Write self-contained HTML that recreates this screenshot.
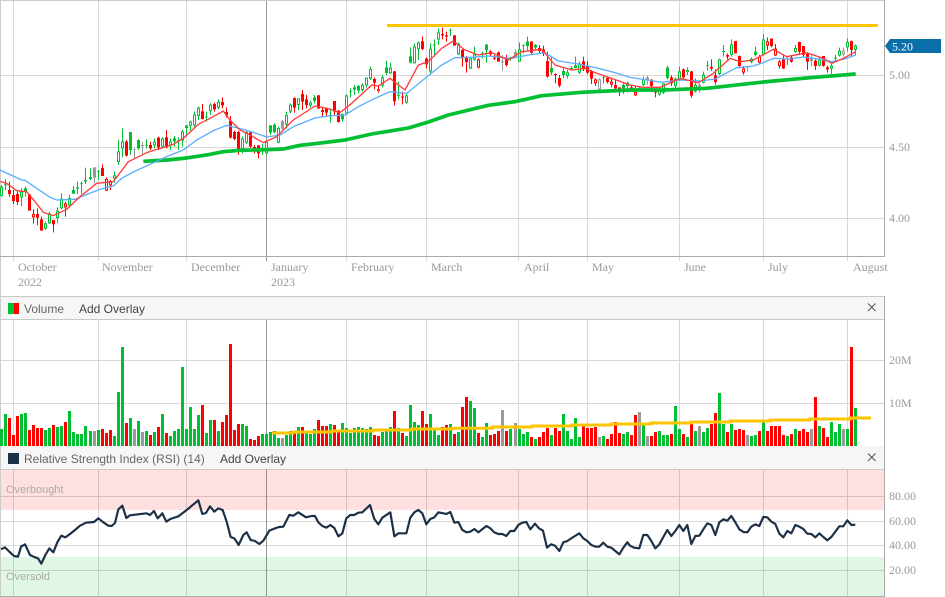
<!DOCTYPE html>
<html><head><meta charset="utf-8"><title>Chart</title>
<style>
html,body{margin:0;padding:0;background:#fff;width:945px;height:597px;overflow:hidden}
svg{display:block}
.ax{font:12px "Liberation Serif",serif;fill:#999}
.hd{font:12px "Liberation Sans",sans-serif}
.ob{font:11px "Liberation Sans",sans-serif;fill:#aaa}
.gw{fill:none;stroke:#00bf33;stroke-width:3}
.gb{fill:none;stroke:#00bf33;stroke-width:9}
.rw{fill:none;stroke:#f00;stroke-width:3}
.rb{fill:none;stroke:#f00;stroke-width:9}
.kw{fill:none;stroke:#999;stroke-width:3}
.kb{fill:none;stroke:#999;stroke-width:9}
.wb{fill:none;stroke:#fff;stroke-width:3}
.grid{fill:none;stroke:#d8d8d8;stroke-width:1}
</style></head><body>
<svg width="945" height="597" viewBox="0 0 945 597" xmlns="http://www.w3.org/2000/svg">
<rect width="945" height="597" fill="#fff"/>
<!-- grid -->
<path class="grid" d="M1 75.5H884M1 147.5H884M1 218.5H884M1 360.5H884M1 403.5H884M1 496.5H884M1 521.5H884M1 545.5H884M1 570.5H884"/>
<path class="grid" d="M13.5 1V261M98.5 1V261M186.5 1V261M346.5 1V261M426.5 1V261M518.5 1V261M587.5 1V261M679.5 1V261M763.5 1V261M847.5 1V261M13.5 319V446M98.5 319V446M186.5 319V446M346.5 319V446M426.5 319V446M518.5 319V446M587.5 319V446M679.5 319V446M763.5 319V446M847.5 319V446M13.5 469V596M98.5 469V596M186.5 469V596M346.5 469V596M426.5 469V596M518.5 469V596M587.5 469V596M679.5 469V596M763.5 469V596M847.5 469V596"/>
<path fill="none" stroke="#999" d="M266.5 1V261M266.5 319V446M266.5 469V596"/>
<!-- frame -->
<path fill="none" stroke="#ccc" d="M.5 0V597M0 .5H885"/>
<path fill="none" stroke="#aaa" d="M0 256.5H885M884.5 0V257"/>
<!-- main yellow -->
<path fill="none" stroke="#ffc400" stroke-width="3" d="M387 25.5H878"/>
<!-- candles -->
<g transform="scale(.33333)">
<g>
<path class="gw" d="M4.5 555V590M16.5 538V570M64.5 565V618M76.5 560V590M136.5 665V690M148.5 635V672M172.5 622V670M184.5 580V628M208.5 585V622M220.5 558V582M232.5 545V582M244.5 545V582M256.5 503V552M271.5 505V540M295.5 510V540M343.5 515V548M355.5 420V495M367.5 385V472M391.5 396V465M415.5 418V450M439.5 418V445M463.5 415V445M487.5 412V445M511.5 415V450M523.5 408V440M535.5 412V450M547.5 390V440M559.5 375V405M571.5 362V392M583.5 335V383M595.5 320V360M619.5 335V365M631.5 310V345M655.5 298V328M727.5 410V460M739.5 392V432M787.5 432V465M799.5 425V462M811.5 375V405M823.5 370V400M835.5 380V430M859.5 335V385M871.5 310V340M895.5 295V330M931.5 302V322M943.5 285V310"/>
<path class="gb" d="M16.5 553V556M76.5 565V573M220.5 570V581M232.5 562V566M244.5 549V551M256.5 540V544M271.5 531V537M295.5 513V515M391.5 396V450M415.5 420V445M439.5 435V437M523.5 415V424M535.5 420V422M559.5 376V384M619.5 350V352M787.5 445V447M811.5 376V398M823.5 374V396M943.5 292V303M4.5 560V588M64.5 575V592M136.5 670V686M148.5 640V670M172.5 632V654M184.5 596V625M208.5 594V616M343.5 526V536M355.5 454V486M367.5 424V445M463.5 425V436M487.5 415V440M511.5 424V436M547.5 394V422M571.5 365V377M583.5 343V376M595.5 323V348M631.5 314V333M655.5 305V323M727.5 415V447M739.5 396V428M799.5 426V460M835.5 384V428M859.5 345V374M871.5 314V335M895.5 295V315M931.5 307V316"/>
<path class="rw" d="M28.5 545V590M40.5 570V612M52.5 575V615M88.5 582V632M100.5 628V670M112.5 625V675M124.5 650V692M160.5 660V697M196.5 605V650M307.5 493V528M319.5 532V573M331.5 540V570M379.5 420V470M451.5 425V450M475.5 410V450M499.5 390V445M607.5 312V358M643.5 308V335M667.5 292V325M679.5 322V352M691.5 348V415M703.5 392V420M715.5 393V464M751.5 395V443M763.5 435V460M775.5 435V475M883.5 292V338M907.5 270V330M919.5 285V325"/>
<path class="rb" d="M28.5 570V582M40.5 585V603M52.5 582V606M88.5 584V632M100.5 642V652M112.5 642V653M124.5 658V692M160.5 660V673M196.5 610V622M307.5 504V528M319.5 537V572M331.5 543V556M379.5 425V467M451.5 435V445M475.5 413V442M499.5 412V442M607.5 334V357M643.5 312V328M667.5 306V316M679.5 336V346M691.5 362V413M703.5 396V417M715.5 396V447M751.5 397V440M763.5 441V447M775.5 436V460M883.5 294V323M907.5 282V305M919.5 298V315"/>
<path class="kw" d="M283.5 502V550M403.5 445V475M427.5 425V462M847.5 360V390"/>
<path class="kb" d="M283.5 502V533M403.5 447V449M427.5 435V438M847.5 363V386"/>
<path class="wb" d="M4.5 563V585M64.5 578V589M136.5 673V683M148.5 643V667M172.5 635V651M184.5 599V622M208.5 597V613M343.5 529V533M355.5 457V483M367.5 427V442M463.5 428V433M487.5 418V437M511.5 427V433M547.5 397V419M571.5 368V374M583.5 346V373M595.5 326V345M631.5 317V330M655.5 308V320M727.5 418V444M739.5 399V425M799.5 429V457M835.5 387V425M859.5 348V371M871.5 317V332M895.5 298V312M931.5 310V313M100.5 645V649M196.5 613V619M319.5 540V569M331.5 546V553"/>
</g>
<g transform="translate(945 0)">
<path class="gw" d="M46.5 325V368M82.5 340V365M94.5 283V345M106.5 265V292M118.5 255V285M130.5 255V280M142.5 250V275M154.5 232V263M166.5 200V240M202.5 225V262M214.5 182V225M226.5 188V222M250.5 245V298M274.5 283V312M286.5 142V190M298.5 130V190M310.5 125V180M346.5 130V222M358.5 118V170M370.5 85V135M406.5 85V108M430.5 128V165M466.5 170V207M478.5 140V182M502.5 155V175M514.5 132V188M586.5 170V182M613.5 127V185M625.5 133V160M637.5 110V150M661.5 132V152M709.5 170V225M745.5 205V235M757.5 210V235M769.5 198V212M781.5 170V205M793.5 185V222M865.5 228V250M925.5 250V282M937.5 245V278"/>
<path class="gb" d="M46.5 345V347M82.5 342V358M106.5 274V276M118.5 262V269M130.5 258V272M214.5 202V219M250.5 284V287M286.5 169V188M358.5 134V136M406.5 91V93M502.5 160V163M514.5 134V150M586.5 174V176M625.5 136V138M637.5 124V138M661.5 135V143M709.5 204V218M745.5 213V225M769.5 204V207M781.5 196V204M865.5 231V233M925.5 255V265M94.5 286V340M142.5 254V270M154.5 233V256M166.5 207V236M202.5 232V257M226.5 203V220M274.5 286V308M298.5 139V190M310.5 127V148M346.5 146V215M370.5 97V119M430.5 131V163M466.5 175V206M478.5 163V179M613.5 148V185M757.5 217V228M793.5 190V218M937.5 248V258"/>
<path class="rw" d="M10.5 285V327M22.5 322V350M34.5 323V350M58.5 303V345M70.5 330V368M178.5 232V268M190.5 255V278M238.5 213V316M262.5 275V313M322.5 110V150M334.5 172V205M382.5 83V118M394.5 95V125M418.5 105V137M442.5 148V200M454.5 168V218M490.5 175V205M526.5 150V170M538.5 165V180M550.5 155V185M574.5 165V200M649.5 124V165M673.5 135V160M685.5 137V168M697.5 155V233M721.5 220V250M733.5 225V262M805.5 170V213M817.5 183V222M829.5 210V252M841.5 235V258M877.5 230V250M889.5 235V262M901.5 240V268M913.5 262V288"/>
<path class="rb" d="M10.5 286V325M22.5 330V336M34.5 325V338M58.5 303V335M70.5 332V366M178.5 237V248M190.5 268V273M238.5 214V304M262.5 290V293M322.5 124V147M334.5 176V193M382.5 102V106M394.5 106V110M418.5 106V137M442.5 149V175M454.5 174V186M490.5 178V203M526.5 154V163M538.5 173V176M550.5 157V185M574.5 176V195M649.5 124V158M673.5 144V153M685.5 148V160M697.5 183V230M721.5 222V225M733.5 234V257M805.5 184V208M817.5 197V218M829.5 214V236M841.5 238V250M877.5 234V246M889.5 245V254M901.5 255V265M913.5 262V272"/>
<path class="kw" d="M562.5 165V212M601.5 148V175M853.5 235V270"/>
<path class="kb" d="M562.5 184V187M601.5 156V172M853.5 238V268"/>
<path class="wb" d="M94.5 289V337M142.5 257V267M154.5 236V253M166.5 210V233M202.5 235V254M226.5 206V217M274.5 289V305M298.5 142V187M310.5 130V145M346.5 149V212M370.5 100V116M430.5 134V160M466.5 178V203M478.5 166V176M613.5 151V182M757.5 220V225M793.5 193V215M937.5 251V255M190.5 270V271M490.5 181V200M841.5 241V247M889.5 248V251M853.5 241V265"/>
</g>
<g transform="translate(1890 0)">
<path class="gw" d="M40.5 230V258M88.5 265V287M100.5 250V282M112.5 197V238M136.5 232V265M148.5 200V243M172.5 202V225M196.5 235V278M220.5 215V250M232.5 183V212M268.5 176V225M280.5 135V170M304.5 118V170M364.5 172V190M376.5 140V170M400.5 102V165M472.5 170V195M496.5 135V158M568.5 172V200M604.5 192V222M616.5 165V185M628.5 143V170M652.5 115V155M676.5 133V165"/>
<path class="gb" d="M40.5 238V255M88.5 272V284M100.5 250V278M112.5 203V234M136.5 236V258M148.5 214V240M172.5 210V216M196.5 254V274M220.5 224V248M232.5 195V197M268.5 178V222M280.5 153V156M304.5 133V165M364.5 176V186M376.5 155V165M400.5 118V163M472.5 175V178M496.5 144V156M568.5 178V197M604.5 197V206M616.5 173V176M628.5 152V167M652.5 126V142M676.5 137V150"/>
<path class="rw" d="M4.5 255V270M16.5 258V288M64.5 238V268M76.5 270V292M124.5 226V258M160.5 206V238M184.5 213V293M244.5 178V212M256.5 208V254M292.5 160V178M316.5 123V160M328.5 167V205M340.5 198V224M388.5 165V190M412.5 112V150M424.5 115V142M436.5 132V168M448.5 180V205M460.5 165V207M484.5 168V188M508.5 125V165M520.5 138V172M532.5 158V210M556.5 178V210M580.5 168V200M592.5 198V218M664.5 122V172"/>
<path class="rb" d="M4.5 262V267M16.5 276V286M64.5 239V258M76.5 275V278M124.5 232V250M160.5 208V232M184.5 214V287M244.5 201V206M256.5 226V246M292.5 165V170M316.5 123V160M328.5 168V198M340.5 205V218M388.5 170V188M412.5 124V137M424.5 116V138M436.5 146V166M448.5 184V198M460.5 178V205M484.5 172V185M508.5 126V155M520.5 138V165M532.5 162V185M556.5 182V198M580.5 168V198M592.5 202V208M664.5 123V150"/>
<path class="kw" d="M28.5 258V272M52.5 228V255M208.5 250V278M352.5 198V214M544.5 165V200M640.5 143V170"/>
<path class="kb" d="M28.5 262V266M52.5 232V240M208.5 254V262M352.5 201V203M544.5 173V183M640.5 152V163"/>
<path class="wb" d="M16.5 279V283M40.5 241V252M88.5 275V281M100.5 253V275M136.5 239V255M148.5 217V237M172.5 213V214M196.5 257V271M220.5 227V245M268.5 181V219M304.5 136V162M340.5 208V215M364.5 179V183M388.5 173V185M400.5 121V160M412.5 127V134M436.5 149V163M448.5 187V195M496.5 147V153M568.5 181V194M604.5 200V203M628.5 155V164M652.5 129V139M676.5 140V147M640.5 155V160"/>
</g>
<!-- moving averages -->
<polyline fill="none" stroke="#00bf33" stroke-width="11" stroke-linejoin="round" points="430,484 500,480 560,474 620,465 670,455 720,451 800,449 850,447 900,436 945,431 1035,420 1115,402 1225,384 1285,366 1345,345 1465,316 1545,305 1625,287 1745,277 1890,270 1990,270 2120,265 2290,246 2430,233 2567,222"/>
<polyline fill="none" stroke="#5aaefc" stroke-width="4" stroke-linejoin="round" points="0,510 30,524 65,540 75,541 110,565 150,592 170,600 225,598 260,583 300,568 340,558 365,535 400,516 450,493 500,470 550,450 590,420 640,392 680,376 720,386 760,397 800,411 840,405 880,380 945,354 985,348 1035,345 1075,320 1125,295 1170,275 1220,280 1275,235 1325,195 1365,173 1415,172 1465,168 1535,175 1585,165 1635,158 1675,183 1735,192 1795,205 1845,218 1890,232 1940,240 1985,247 2040,240 2100,243 2145,237 2210,203 2260,198 2290,188 2320,175 2370,177 2410,171 2450,176 2495,185 2530,178 2567,165"/>
<polyline fill="none" stroke="#ff3b3b" stroke-width="4" stroke-linejoin="round" points="0,544 20,550 50,572 80,575 105,605 130,637 160,647 200,628 240,590 290,550 340,545 385,485 440,458 520,433 550,415 595,373 630,355 670,333 690,360 720,390 750,405 790,428 830,410 880,360 945,318 985,326 1020,338 1055,310 1115,255 1135,258 1170,235 1215,270 1255,195 1285,185 1325,145 1360,123 1395,150 1435,165 1475,158 1525,180 1565,155 1625,148 1665,195 1715,210 1755,205 1785,218 1835,235 1890,255 1930,262 1980,262 2040,235 2095,248 2140,220 2190,175 2220,185 2260,180 2320,148 2360,170 2420,158 2470,175 2495,190 2530,175 2567,155"/>
</g>
<!-- axis labels -->
<text class="ax" x="18" y="271">October</text><text class="ax" x="18" y="286">2022</text>
<text class="ax" x="102" y="271">November</text>
<text class="ax" x="191" y="271">December</text>
<text class="ax" x="271" y="271">January</text><text class="ax" x="271" y="286">2023</text>
<text class="ax" x="351" y="271">February</text>
<text class="ax" x="431" y="271">March</text>
<text class="ax" x="524" y="271">April</text>
<text class="ax" x="592" y="271">May</text>
<text class="ax" x="684" y="271">June</text>
<text class="ax" x="768" y="271">July</text>
<text class="ax" x="853" y="271">August</text>
<text class="ax" x="889" y="79">5.00</text>
<text class="ax" x="889" y="151">4.50</text>
<text class="ax" x="889" y="222">4.00</text>
<!-- price tag -->
<polygon points="885,46 890,39 941,39 941,53 890,53" fill="#0a6ea9"/>
<text x="892" y="50.5" style="font:12px 'Liberation Serif',serif" fill="#fff">5.20</text>
<!-- volume header -->
<rect x="1" y="296.5" width="883" height="23" fill="#f6f6f6"/>
<path fill="none" stroke="#c8c8c8" d="M1 296.5H884M1 319.5H884"/>
<rect x="8" y="303" width="6" height="11" fill="#00bf33"/><rect x="14" y="303" width="5" height="11" fill="#f00"/>
<text class="hd" x="24" y="313" fill="#666">Volume</text>
<text class="hd" x="79" y="313" fill="#444">Add Overlay</text>
<path fill="none" stroke="#555" d="M868 303.5L875.5 311M875.5 303.5L868 311"/>
<!-- volume bars -->
<g fill="none" stroke-width="3">
<path stroke="#00bf33" d="M1.5 446v-17M5.5 446v-32M21.5 446v-32M25.5 446v-33M45.5 446v-16M49.5 446v-18M57.5 446v-19M61.5 446v-20M69.5 446v-35M73.5 446v-14M77.5 446v-12M81.5 446v-12M85.5 446v-20M90.5 446v-15M98.5 446v-16M114.5 446v-10M118.5 446v-54M122.5 446v-99M130.5 446v-28M138.5 446v-25M146.5 446v-15M154.5 446v-14M162.5 446v-32M170.5 446v-10M174.5 446v-15M178.5 446v-17M182.5 446v-79M186.5 446v-17M190.5 446v-39M194.5 446v-17M198.5 446v-31M206.5 446v-13M210.5 446v-26M218.5 446v-15M242.5 446v-22M246.5 446v-20M262.5 446v-12M266.5 446v-12M270.5 446v-14M274.5 446v-15M278.5 446v-8M286.5 446v-11M290.5 446v-15M298.5 446v-19M306.5 446v-14M310.5 446v-12M314.5 446v-17M330.5 446v-22M342.5 446v-23M346.5 446v-18M350.5 446v-13M354.5 446v-18M358.5 446v-19M362.5 446v-18M366.5 446v-17M370.5 446v-19M382.5 446v-14M386.5 446v-15M390.5 446v-19M398.5 446v-18M406.5 446v-10M410.5 446v-41M414.5 446v-24M418.5 446v-21M430.5 446v-32M434.5 446v-16M438.5 446v-11M450.5 446v-22M458.5 446v-14M470.5 446v-45M474.5 446v-38M482.5 446v-9M486.5 446v-23M510.5 446v-17M519.5 446v-17M523.5 446v-12M527.5 446v-14M535.5 446v-7M551.5 446v-11M563.5 446v-32M567.5 446v-15M571.5 446v-7M575.5 446v-28M579.5 446v-9M603.5 446v-10M623.5 446v-12M627.5 446v-14M643.5 446v-21M659.5 446v-15M663.5 446v-11M667.5 446v-11M675.5 446v-40M679.5 446v-17M687.5 446v-9M695.5 446v-15M703.5 446v-14M707.5 446v-18M719.5 446v-53M723.5 446v-22M731.5 446v-22M751.5 446v-10M755.5 446v-11M763.5 446v-24M787.5 446v-10M795.5 446v-17M819.5 446v-20M831.5 446v-24M835.5 446v-14M839.5 446v-22M847.5 446v-17M855.5 446v-38"/>
<path stroke="#f00" d="M9.5 446v-28M13.5 446v-11M17.5 446v-30M29.5 446v-16M33.5 446v-21M37.5 446v-18M41.5 446v-18M53.5 446v-21M65.5 446v-24M102.5 446v-17M106.5 446v-13M110.5 446v-16M126.5 446v-23M150.5 446v-11M158.5 446v-19M166.5 446v-13M202.5 446v-41M214.5 446v-26M222.5 446v-24M226.5 446v-31M230.5 446v-102M234.5 446v-16M238.5 446v-22M250.5 446v-7M254.5 446v-6M258.5 446v-10M294.5 446v-15M302.5 446v-19M318.5 446v-26M322.5 446v-20M326.5 446v-20M334.5 446v-21M338.5 446v-15M374.5 446v-11M378.5 446v-10M394.5 446v-35M402.5 446v-13M422.5 446v-35M426.5 446v-22M442.5 446v-19M446.5 446v-21M454.5 446v-12M462.5 446v-39M466.5 446v-49M478.5 446v-13M490.5 446v-11M494.5 446v-12M498.5 446v-15M506.5 446v-15M531.5 446v-9M539.5 446v-9M543.5 446v-14M547.5 446v-18M555.5 446v-18M559.5 446v-15M583.5 446v-20M587.5 446v-18M591.5 446v-18M595.5 446v-19M607.5 446v-7M611.5 446v-12M615.5 446v-24M619.5 446v-13M631.5 446v-11M635.5 446v-31M651.5 446v-10M655.5 446v-14M671.5 446v-12M683.5 446v-12M691.5 446v-22M711.5 446v-22M715.5 446v-33M727.5 446v-14M735.5 446v-16M739.5 446v-17M743.5 446v-16M759.5 446v-15M767.5 446v-15M771.5 446v-20M775.5 446v-20M779.5 446v-20M783.5 446v-11M791.5 446v-12M799.5 446v-15M803.5 446v-17M807.5 446v-14M815.5 446v-49M823.5 446v-18M827.5 446v-9M851.5 446v-99"/>
<path stroke="#999" d="M94.5 446v-15M134.5 446v-17M142.5 446v-14M282.5 446v-8M502.5 446v-36M515.5 446v-23M599.5 446v-9M639.5 446v-34M647.5 446v-10M699.5 446v-20M747.5 446v-11M811.5 446v-17M843.5 446v-17"/>
</g>
<path fill="none" stroke="#ffc400" stroke-width="3" d="M272 433H293V432H332V431H373V430H412V429H452V428.3H492V427H532V426H572V425H611V424H651V423H691V422H730V421H770V420H810V419H850V418H871"/>
<text class="ax" x="889" y="364">20M</text>
<text class="ax" x="889" y="407">10M</text>
<!-- rsi header -->
<rect x="1" y="446" width="883" height="23" fill="#f6f6f6"/>
<path fill="none" stroke="#c8c8c8" d="M1 469.5H884"/>
<rect x="8" y="453" width="11" height="11" fill="#1b3045"/>
<text class="hd" x="24" y="463" fill="#666">Relative Strength Index (RSI) (14)</text>
<text class="hd" x="220" y="463" fill="#444">Add Overlay</text>
<path fill="none" stroke="#555" d="M868 453.5L875.5 461M875.5 453.5L868 461"/>
<!-- rsi bands -->
<rect x="1" y="470" width="883" height="40" fill="#f00" fill-opacity=".12"/>
<rect x="1" y="557" width="883" height="39" fill="#00c033" fill-opacity=".12"/>
<text class="ob" x="6" y="493">Overbought</text>
<text class="ob" x="6" y="580">Oversold</text>
<g transform="translate(0 295) scale(.33333)">
<polyline fill="none" stroke="#1b3045" stroke-width="6.5" stroke-linejoin="round" points="3,763 15,757 30,772 42,783 54,785 63,755 75,748 90,780 105,787 114,790 124,806 136,780 148,760 160,772 172,742 184,722 196,727 210,717 225,705 240,692 258,683 282,681 295,670 310,682 325,692 335,693 345,684 355,643 367,632 379,669 390,661 415,658 440,655 450,660 462,648 473,670 487,655 499,680 511,672 535,664 560,645 595,616 607,657 618,654 630,634 643,650 655,640 668,645 680,680 692,726 703,730 716,750 730,720 740,712 752,735 765,738 778,747 790,737 808,707 825,700 837,696 850,695 868,660 880,662 895,652 918,667 935,663 945,663 955,682 967,693 979,698 991,690 1003,699 1015,724 1027,715 1039,670 1051,660 1063,660 1075,653 1087,652 1110,630 1123,672 1135,688 1147,668 1171,652 1183,724 1195,715 1219,715 1231,668 1243,652 1255,645 1267,655 1279,688 1291,672 1303,667 1315,652 1339,657 1351,651 1363,683 1375,681 1387,705 1399,712 1411,710 1423,702 1435,712 1459,693 1471,700 1483,712 1495,717 1507,717 1519,723 1531,708 1543,708 1555,690 1567,683 1579,681 1591,703 1605,686 1617,700 1629,707 1641,758 1653,748 1665,752 1678,768 1690,742 1702,738 1720,726 1738,715 1750,730 1762,738 1774,750 1786,755 1798,755 1810,743 1822,755 1834,758 1846,768 1858,778 1870,758 1882,742 1890,752 1902,758 1918,760 1930,720 1942,720 1954,738 1966,760 1978,748 1990,726 2002,705 2014,723 2026,708 2038,690 2050,708 2062,690 2074,747 2086,723 2098,722 2110,703 2122,685 2134,690 2146,720 2158,682 2170,673 2182,677 2194,663 2206,682 2218,703 2230,711 2242,712 2254,695 2266,688 2278,693 2290,666 2302,667 2314,680 2326,687 2338,716 2350,727 2362,708 2374,715 2386,690 2398,695 2410,702 2422,716 2434,717 2446,727 2458,715 2470,726 2482,736 2494,726 2506,710 2518,694 2530,694 2542,676 2554,690 2566,689"/>
</g>
<path fill="none" stroke="#aaa" d="M884.5 296V597M0 596.5H885"/>
<text class="ax" x="889" y="500">80.00</text>
<text class="ax" x="889" y="525">60.00</text>
<text class="ax" x="889" y="549">40.00</text>
<text class="ax" x="889" y="574">20.00</text>
</svg>
</body></html>
